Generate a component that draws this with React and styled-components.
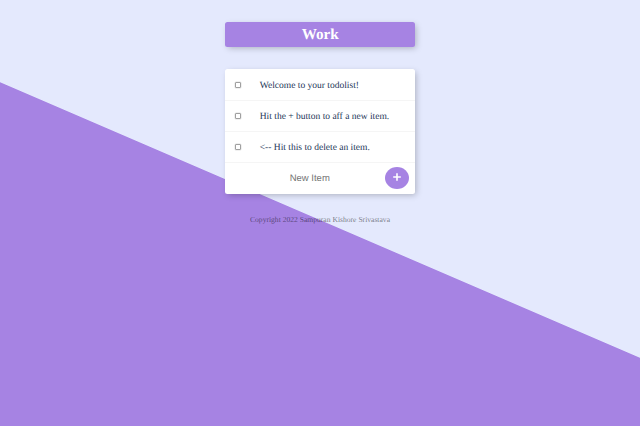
import React from "react";
import styled, { createGlobalStyle } from "styled-components";

const Global = createGlobalStyle`
  * { box-sizing: border-box; }
  body {
    margin: 0;
    font-family: "Liberation Serif", "Times New Roman", serif;
    text-rendering: geometricPrecision;
  }
`;

const Page = styled.main`
  min-height: 100vh;
  display: flex;
  flex-direction: column;
  align-items: center;
  padding-top: 22px;
  background: linear-gradient(203.3deg, #e4e9fd 50.93%, #a683e3 51.07%);
`;

const Box = styled.section`
  width: 190px;
  margin-left: 0.5px;
  background: #fff;
  border-radius: 2.5px;
  box-shadow: 2px 2px 6px -1px rgba(0, 0, 0, 0.25);
`;

const Heading = styled(Box)`
  height: 25px;
  margin-bottom: 22px;
  background: #a683e3;
  display: flex;
  align-items: center;
  justify-content: center;
`;

const List = styled(Box)`
  padding-top: 0.75px;
`;

const Title = styled.h1`
  margin: 0;
  padding-top: 1px;
  color: #fff;
  font-size: 15.2px;
  line-height: 24px;
`;

const Item = styled.label`
  height: 31px;
  display: flex;
  align-items: center;
  border-bottom: 1px solid #f5f5f5;
`;

const Check = styled.input`
  appearance: none;
  width: 6px;
  height: 6px;
  margin: 0 19px 0 9.5px;
  border: 1px solid #a0a0a0;
  border-radius: 1px;
  background: #fff;
  box-shadow: 0 0 0 0.5px rgba(0, 0, 0, 0.12);
`;

const ItemText = styled.span`
  padding-top: 2px;
  color: #1c3557;
  font-size: 9.5px;
  line-height: 12px;
  white-space: nowrap;
`;

const NewItem = styled.form`
  height: 31px;
  display: flex;
  align-items: center;
`;

const Field = styled.input`
  width: 160px;
  height: 30px;
  padding: 0 0 0 9px;
  border: 0;
  outline: 0;
  background: transparent;
  text-align: center;
  font: 9.5px "Liberation Sans", Arial, sans-serif;
  text-rendering: geometricPrecision;
  &::placeholder { color: #757575; }
`;

const Add = styled.button`
  width: 24px;
  height: 22px;
  border: 0;
  padding: 0 0 2px;
  border-radius: 50%;
  background: #a683e3;
  display: grid;
  place-items: center;
`;

const Footer = styled.footer`
  margin-top: 21px;
  color: rgba(0, 0, 0, 0.5);
  font-size: 7.6px;
  line-height: 10px;
`;

const items = [
  "Welcome to your todolist!",
  "Hit the + button to aff a new item.",
  "<-- Hit this to delete an item.",
];

export default function App() {
  return (
    <Page>
      <Global />
      <Heading><Title>Work</Title></Heading>
      <List>
        {items.map((text) => (
          <Item key={text}><Check type="checkbox" /><ItemText>{text}</ItemText></Item>
        ))}
        <NewItem>
          <Field placeholder="New Item" />
          <Add type="button" aria-label="Add item">
            <svg width="8" height="8" viewBox="0 0 8 8"><path d="M4 .2v7.6M.2 4h7.6" stroke="#fff" strokeWidth="1.6" /></svg>
          </Add>
        </NewItem>
      </List>
      <Footer>Copyright 2022 Sampuran Kishore Srivastava</Footer>
    </Page>
  );
}
